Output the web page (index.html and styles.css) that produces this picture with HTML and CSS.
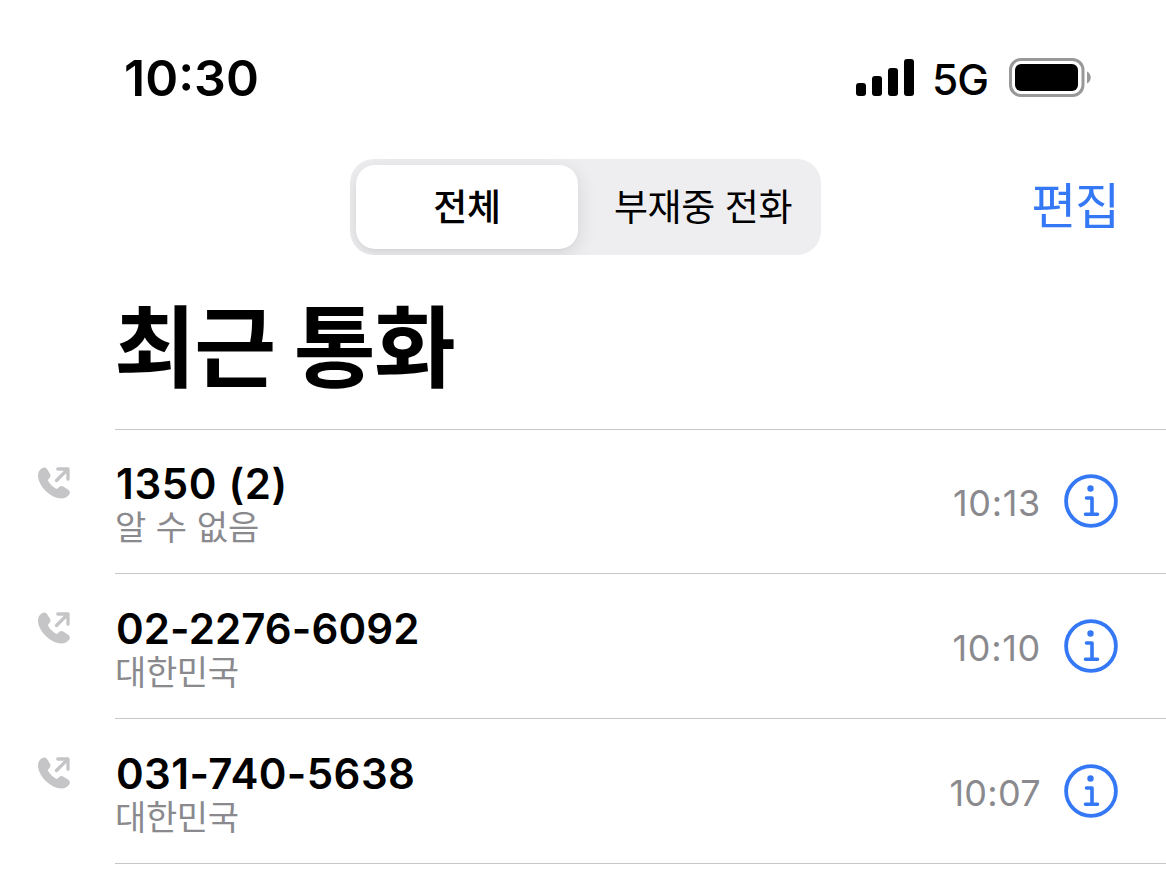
FILE: index.html
```html
<!DOCTYPE html>
<html lang="ko">
<head>
<meta charset="utf-8">
<title>최근 통화</title>
<link rel="stylesheet" href="styles.css">
</head>
<body>
<svg class="defs" aria-hidden="true">
  <symbol id="outgoing" viewBox="0 0 34 34">
    <path fill="currentColor" d="M10 3 12.800 7.500c1 1.500.9 3-.1 4.200l-1.400 1.600c-.5.6-.5 1.100-.1 1.800 1.800 3 4.500 5.700 7.500 7.400.7.4 1.300.4 1.800-.1l1.700-1.500c1.200-1.100 2.600-1.200 4-.3l5 3.100c1.800 1.200 2.200 3.100 1 4.800-2 2.700-4.500 4-7.700 4C14 32.500 1 20 1 9.500 1 6.300 2.400 3.800 5 2.200 6.900 1 8.800 1.200 10 3Z"/>
    <path fill="none" stroke="currentColor" stroke-width="3.300" stroke-linecap="round" stroke-linejoin="round" d="M19.500 14.500 30.500 3.500M20.800 3h10.200v10.200"/>
  </symbol>
  <symbol id="info" viewBox="0 0 54 54">
    <circle cx="27" cy="27" r="24.900" fill="none" stroke="currentColor" stroke-width="3.800"/>
    <circle cx="26.500" cy="14.500" r="3.200" fill="currentColor"/>
    <path fill="none" stroke="currentColor" stroke-width="3.600" stroke-linecap="round" stroke-linejoin="round" d="M22.500 24h5.500V40M21.500 40.300h12"/>
  </symbol>
</svg>
<header class="status">
  <div class="clock">10:30</div>
  <svg class="signal" viewBox="0 0 58 38"><rect y="24" width="10" height="13" rx="3"/><rect x="16" y="17" width="10" height="20" rx="3"/><rect x="32" y="9" width="10" height="28" rx="3"/><rect x="48" width="10" height="37" rx="3"/></svg>
  <div class="network">5G</div>
  <svg class="battery" viewBox="0 0 83 40"><rect x="1.500" y="1.500" width="72.500" height="36" rx="10.500" fill="none" stroke="#999" stroke-width="3"/><rect x="6" y="6" width="63" height="27" rx="6"/><path d="M78 13.500c5 2 5 10 0 12Z" fill="#999"/></svg>
</header>
<nav class="toolbar">
  <div class="segments"><div class="segment selected">전체</div><div class="segment">부재중 전화</div></div>
  <a class="edit">편집</a>
</nav>
<h1 class="title">최근 통화</h1>
<main class="calls">
  <section class="call"><svg class="outgoing"><use href="#outgoing"/></svg><div class="details"><div class="caller"><div class="number n1">1350 (2)</div><div class="place spaced">알 수 없음</div></div><time class="time">10:13</time><svg class="info"><use href="#info"/></svg></div></section>
  <section class="call"><svg class="outgoing"><use href="#outgoing"/></svg><div class="details"><div class="caller"><div class="number n2">02-2276-6092</div><div class="place">대한민국</div></div><time class="time">10:10</time><svg class="info"><use href="#info"/></svg></div></section>
  <section class="call"><svg class="outgoing"><use href="#outgoing"/></svg><div class="details"><div class="caller"><div class="number n3">031-740-5638</div><div class="place">대한민국</div></div><time class="time late">10:07</time><svg class="info"><use href="#info"/></svg></div></section>
</main>
</body>
</html>
```

FILE: styles.css
```css
* { box-sizing: border-box; }
body { margin: 0; height: 869px; overflow: hidden; background: #fff; color: #000; font-family: Inter, "Noto Sans CJK KR", sans-serif; }
.defs { display: none; }
.status { height: 159px; padding: 48px 74px 0 124px; display: flex; align-items: flex-start; }
.clock { width: 732px; font-size: 50px; line-height: 60px; font-weight: 600; letter-spacing: 0; }
.signal { width: 58px; height: 38px; margin-top: 11px; flex: none; }
.network { width: 58px; margin: 9px 19px 0 18px; font-size: 42.5px; line-height: 46px; font-weight: 450; letter-spacing: -1px; flex: none; }
.battery { width: 83px; height: 40px; margin-top: 10px; flex: none; }
.toolbar { height: 96px; padding: 0 47px 0 350px; display: flex; justify-content: space-between; }
.segments { width: 471px; height: 96px; padding: 6px; display: flex; border-radius: 24px; background: #eeeef0; overflow: hidden; }
.segment { flex: 1; height: 84px; padding: 1px 0 0 13px; font-size: 37px; line-height: 84px; text-align: center; letter-spacing: -0.4px; white-space: nowrap; }
.selected { flex: 0 0 222px; padding: 1px 0 0; border-radius: 19px; background: #fff; font-weight: 500; box-shadow: 0 5px 20px #0000001c, 0 2px 3px #00000008; }
.edit { padding-top: 1px; color: #3478f6; font-size: 49px; line-height: 94px; letter-spacing: -1.2px; }
.title { height: 174px; margin: 0; padding: 40px 0 0 114px; font-size: 89px; line-height: 106px; font-weight: 700; letter-spacing: -1.7px; }
.call { height: 145px; display: flex; padding-left: 37px; }
.call:first-child { height: 144px; }
.outgoing { width: 34px; height: 34px; margin: 38px 44px 0 0; color: #c5c5c7; flex: none; }
.details { flex: 1; border-top: 1px solid #c6c6c8; display: flex; padding-right: 48px; }
.caller { flex: 1; padding-top: 32px; }
.number { height: 46px; padding-left: 1px; font-size: 42px; line-height: 46px; font-weight: 600; white-space: nowrap; }
.n1 { letter-spacing: 0.65px; }
.n2 { letter-spacing: 0.1px; }
.n3 { letter-spacing: 0.4px; }
.place { padding-top: 1px; color: #8a8a8e; font-size: 34px; line-height: 40px; letter-spacing: -0.4px; }
.spaced { letter-spacing: 0; }
.time { margin: 52px 23px 0 0; color: #8a8a8e; font-size: 36px; line-height: 44px; letter-spacing: 0.7px; }
.late { letter-spacing: 0.3px; }
.info { width: 54px; height: 54px; margin-top: 45px; color: #3478f6; flex: none; }
.call:first-child .outgoing { margin-top: 37px; }
.call:first-child .caller { padding-top: 31px; }
.call:first-child .time { margin-top: 51px; }
.call:first-child .info { margin-top: 44px; }
.calls::after { content: ""; display: block; margin-left: 115px; border-top: 1px solid #c6c6c8; }
```
